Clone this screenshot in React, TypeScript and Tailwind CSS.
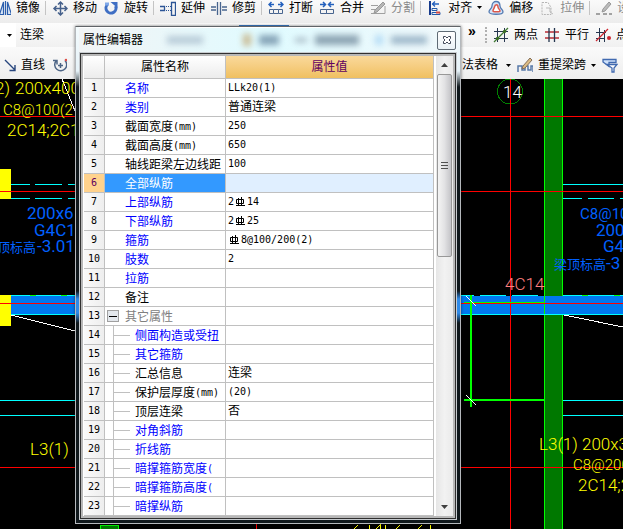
import type { ReactNode } from "react";

type Row = {
	name: string;
	unit?: string;
	value?: ReactNode;
	tone?: "blue" | "black" | "gray";
	child?: boolean;
	group?: boolean;
	active?: boolean;
};

const tones = {
	blue: "text-[#0000ff]",
	black: "text-black",
	gray: "text-[#808080]",
};

const mono = "font-['DejaVu_Sans_Mono',monospace] text-[10px]";

function Rebar() {
	return (
		<svg width="11" height="10" viewBox="0 0 11 10" className="mx-px shrink-0" fill="none" stroke="#000">
			<path d="M1.500 2.500h7v4h-7zM3.500 1v8M6.500 0v9M1 8.500h9" />
		</svg>
	);
}

const rows: Row[] = [
	{ name: "名称", tone: "blue", value: <span className={mono}>LLk20(1)</span> },
	{ name: "类别", tone: "blue", value: "普通连梁" },
	{ name: "截面宽度", unit: "(mm)", value: <span className={mono}>250</span> },
	{ name: "截面高度", unit: "(mm)", value: <span className={mono}>650</span> },
	{ name: "轴线距梁左边线距", value: <span className={mono}>100</span> },
	{ name: "全部纵筋", active: true },
	{ name: "上部纵筋", tone: "blue", value: <><span className={mono}>2</span><Rebar /><span className={mono}>14</span></> },
	{ name: "下部纵筋", tone: "blue", value: <><span className={mono}>2</span><Rebar /><span className={mono}>25</span></> },
	{ name: "箍筋", tone: "blue", value: <><Rebar /><span className={mono}>8@100/200(2)</span></> },
	{ name: "肢数", tone: "blue", value: <span className={mono}>2</span> },
	{ name: "拉筋", tone: "blue" },
	{ name: "备注" },
	{ name: "其它属性", tone: "gray", group: true },
	{ name: "侧面构造或受扭", tone: "blue", child: true },
	{ name: "其它箍筋", tone: "blue", child: true },
	{ name: "汇总信息", child: true, value: "连梁" },
	{ name: "保护层厚度", unit: "(mm)", child: true, value: <span className={mono}>(20)</span> },
	{ name: "顶层连梁", child: true, value: "否" },
	{ name: "对角斜筋", tone: "blue", child: true },
	{ name: "折线筋", tone: "blue", child: true },
	{ name: "暗撑箍筋宽度", unit: "(", tone: "blue", child: true },
	{ name: "暗撑箍筋高度", unit: "(", tone: "blue", child: true },
	{ name: "暗撑纵筋", tone: "blue", child: true },
];

function Icon({ children }: { children: ReactNode }) {
	return (
		<svg width="16" height="16" viewBox="0 0 16 16" fill="none" className="shrink-0">
			{children}
		</svg>
	);
}

function Caret() {
	return (
		<svg width="5" height="3" viewBox="0 0 5 3" className="shrink-0">
			<path d="M0 0h5L2.500 3z" fill="#000" />
		</svg>
	);
}

function Tool({ icon, label, muted, menu }: { icon: ReactNode; label?: string; muted?: boolean; menu?: boolean }) {
	return (
		<button className={`flex shrink-0 items-center gap-[5px] whitespace-nowrap ${muted ? "text-[#8a8a8a]" : "text-black"}`}>
			<Icon>{icon}</Icon>
			{label}
			{menu && <Caret />}
		</button>
	);
}

function Sep() {
	return <span className="-ml-px h-[14px] w-px shrink-0 bg-[#c4c4c4]" />;
}

const icons = {
	mirror: <><path d="M8.500 2v12.500H4.500z" fill="#dce8f8" stroke="#2b5fae" strokeWidth="1.200" /><path d="M10.500 1v14" stroke="#2b5fae" strokeWidth="1.200" /><path d="M12.500 2v12.500h4z" fill="#dce8f8" stroke="#2b5fae" strokeWidth="1.200" /></>,
	move: <path d="M8.500 3v11M3 8.500h11M6 4.500l2.500-2.500 2.500 2.500M6 12.500l2.500 2.500 2.500-2.500M4.500 6L2 8.500 4.500 11M12.500 6L15 8.500 12.500 11" stroke="#46618c" strokeWidth="1.500" />,
	rotate: <><path d="M4.500 4.500a5 5 0 1 0 8 1.500" stroke="#3f6fc4" strokeWidth="3" /><path d="M7.500 2h7v6z" fill="#3f6fc4" /><path d="M2 2.500h4v3H2z" fill="#7fa8e8" /></>,
	extend: <><path d="M0 6.500h4.500v4H0M11.500 2.500h4v13h-4z" stroke="#2c5596" strokeWidth="1.300" /><path d="M6 6.500h5M6 10.500h5" stroke="#2c5596" strokeDasharray="1 1" /></>,
	trim: <path d="M0 7h5M0 10h5M11 7h5M11 10h5M6.500 2v13M9.500 2v13" stroke="#48658f" strokeWidth="1.300" />,
	breakIt: <><path d="M1 4.500h5M10 4.500h5M3.500 2L1 4.500 3.500 7M12.500 2L15 4.500 12.500 7" stroke="#2360bd" strokeWidth="1.500" /><path d="M1.500 9.500h4v4h-4zM10.500 9.500h4v4h-4zM5.500 9.500h5M5.500 13.500h5" stroke="#48658f" /></>,
	merge: <><path d="M1 4.500h5M10 4.500h5M4 2l2.500 2.500L4 7M12 2L9.500 4.500 12 7" stroke="#2360bd" strokeWidth="1.500" /><path d="M1.500 9.500h6v4h-6zM7.500 9.500h7v4h-7z" stroke="#48658f" /></>,
	split: <><path d="M1 5.500h7M1 13.500h14V6M1 9.500h4" stroke="#a0a0a0" /><path d="M13 2l2 2-8 8-3 1 1-3z" fill="#b5b5b5" stroke="#999" /></>,
	align: <><path d="M3 1v14" stroke="#173b8c" strokeWidth="2" /><path d="M5 4h7M8 1.500L5.500 4 8 6.500" stroke="#2360bd" strokeWidth="1.300" /><path d="M5 8.500h5v2H5zM5 12.500h8v2H5z" stroke="#245aa9" /><path d="M9 11.500h4v2H9z" fill="#d64b42" /></>,
	offset: <><path d="M1 12c0-3 3-3 3-6 0-6 8-6 8 0 0 3 3 3 3 6 0 3-14 3-14 0z" fill="#d3e3f8" stroke="#547bb2" strokeWidth="1.300" /><path d="M5 11c0-2 1-2 1.500-4C7 4 10 4 10 7c0 2 2 2 2 4 0 1-7 1-7 0z" fill="#fff" stroke="#db584b" strokeWidth="1.500" /></>,
	stretch: <><path d="M3 2.500h6l3 5v7H3z" stroke="#b5b5b5" strokeDasharray="2 1" /><path d="M7 8h4v4M11 12l3 2" stroke="#bbb" /></>,
	set: <><path d="M0 14h4M7 14h4M13 14h3" stroke="#888" strokeWidth="1.300" /><path d="M13 2l2 2-6 7-3 1 1-3z" fill="#bbb" stroke="#999" /></>,
	twoPoint: <><path d="M1 4.500h14M1 11.500h14M4.500 1v14M11.500 1v14" stroke="#26364f" /><path d="M1 15L15 1" stroke="#3f7932" strokeWidth="1.300" /><circle cx="4.500" cy="11.500" r="1.700" fill="#3b6e24" /><circle cx="11.500" cy="4.500" r="1.700" fill="#3b6e24" /></>,
	parallel: <><path d="M1 5h14M1 11h14" stroke="#b92d35" strokeWidth="1.300" /><path d="M5 1v14M10.500 1v14" stroke="#26364f" strokeWidth="1.300" /></>,
	pointAngle: <><path d="M1 5.500h10M1 11.500h8M4.500 1v14M9.500 3v12" stroke="#26364f" /><path d="M1 14L13 2" stroke="#cd2630" strokeWidth="1.300" /><circle cx="14" cy="11" r="2" fill="#cd2630" /></>,
	line: <path d="M5 3l10 10M15 8v5.500h-5.500" stroke="#27457d" strokeWidth="1.400" />,
	arc: <><path d="M5 4a6 6 0 1 0 9-.500M2 3.500h4v4M9.500 6v5M7 8.500h5" stroke="#4c6485" strokeWidth="1.500" /><circle cx="15" cy="3" r="1.300" fill="#dc4f49" /></>,
	span: <><path d="M1 15V9h4v4h3V9h3v4h3V9h2v6" stroke="#587aa9" strokeWidth="1.500" /><path d="M13 1l2 2-7 8-3 1 1-3z" fill="#ddbc84" stroke="#846f59" /></>,
	filter: <><path d="M1 2.500h13v3H7v4L1 5z" fill="#cfe2fb" stroke="#416ab0" strokeWidth="1.300" /><path d="M5 7.500h10l-3 3.500v4h-2v-4z" fill="#fff" stroke="#416ab0" strokeWidth="1.300" /></>,
};

function Toolbars() {
	return (
		<header className="bg-[#f3f3f3] text-xs leading-4">
			<div className="-ml-[5px] flex h-[23px] items-center gap-1.5 overflow-hidden bg-linear-to-b from-[#fafafa] to-[#ececec] pb-2">
				<Tool icon={icons.mirror} label="镜像" />
				<Sep />
				<Tool icon={icons.move} label="移动" />
				<Tool icon={icons.rotate} label="旋转" />
				<Sep />
				<Tool icon={icons.extend} label="延伸" />
				<Tool icon={icons.trim} label="修剪" />
				<Sep />
				<Tool icon={icons.breakIt} label="打断" />
				<Tool icon={icons.merge} label="合并" />
				<Tool icon={icons.split} label="分割" muted />
				<Sep />
				<Tool icon={icons.align} label="对齐" menu />
				<Tool icon={icons.offset} label="偏移" />
				<Tool icon={icons.stretch} label="拉伸" muted />
				<Sep />
				<Tool icon={icons.set} label="设" muted />
			</div>
			<div className="flex h-6 items-center gap-1.5 overflow-hidden bg-linear-to-b from-[#fcfcfc] to-[#f0f0f0]">
				<div className="flex w-[462px] shrink-0 items-center self-stretch">
					<button className="flex h-6 w-4 items-center justify-end bg-white pr-1" aria-label="构件类型">
						<Caret />
					</button>
					<span className="ml-1">连梁</span>
					<span className="ml-[195px] h-[22px] w-[50px] self-end border border-[#3c7fd0] bg-[#d9f6fc]" />
				</div>
				<button className="-mt-2 w-2 shrink-0 text-sm font-bold leading-4" aria-label="更多">»</button>
				<span className="ml-[3px] h-4 w-0 shrink-0 border-l-2 border-dotted border-[#b0b0b0]" />
				<Tool icon={icons.twoPoint} label="两点" />
				<Tool icon={icons.parallel} label="平行" />
				<Tool icon={icons.pointAngle} label="点" />
			</div>
			<div className="flex h-8 items-center gap-1.5 overflow-hidden bg-linear-to-b from-[#fafafa] to-[#eeeeee] pt-1">
				<div className="flex w-[456px] shrink-0 gap-1.5">
					<Tool icon={icons.line} label="直线" />
					<Tool icon={icons.arc} />
				</div>
				<button className="flex shrink-0 items-center gap-2 whitespace-nowrap">
					法表格 <Caret />
				</button>
				<Tool icon={icons.span} label="重提梁跨" menu />
				<Tool icon={icons.filter} />
			</div>
		</header>
	);
}

function Drawing() {
	return (
		<svg
			className="block min-h-[450px] w-full flex-1 bg-black font-['Roboto','Noto_Sans_CJK_SC',sans-serif] text-[17px] font-light"
			shapeRendering="crispEdges"
		>
			{/* column and beam */}
			<rect x="544" width="19" height="100%" fill="#007800" />
			<path d="M544.500 0v900M562.500 0v900" stroke="#00ff00" />
			<rect x="11" y="217" width="100%" height="18" fill="#0078f0" />
			<path d="M544.500 217v18M582 216.500h6M614 216.500h6M30 216.500h6M61 216.500h6" stroke="#00ff00" />
			<path
				d="M11 216.500h19M36 216.500h25M67 216.500h20M461 216.500h13M480 216.500h26M512 216.500h26M563 216.500h19M588 216.500h26M620 216.500h900M11 235.500h1500M11 105.500h19M35 105.500h27M68 105.500h19M11 119.500h19M35 119.500h27M68 119.500h19M563 105.500h900M563 119.500h19M588 119.500h26M620 119.500h20M0 321.500h80M0 336.500h80M563 321.500h900M563 336.500h900"
				stroke="#00ffff"
			/>
			<path d="M0 90h11v30H0zM0 216h11v31H0z" fill="#ffff00" />
			<path d="M11 236l64 16M564 236l64 13M62 0l13 32" stroke="#fff" />

			{/* axis grid */}
			<circle cx="510" cy="12.500" r="12.500" fill="none" stroke="#008000" />
			<path d="M0 37.500h2000M0 112.500h2000M0 224.500h2000M0 388.500h2000M510.500 0v900M256.500 0v900" stroke="#ff0000" />
			<text x="503" y="19" fill="#fff">14</text>

			{/* dimension marks */}
			<path d="M464 223.500h80" stroke="#00ff00" />
			<path d="M471 216v112M464 321h80" stroke="#00ff00" strokeWidth="2" />
			<path d="M466 217l10 10M466 316l10 10" stroke="#fff" />

			{/* beam labels */}
			<text x="505" y="211" fill="#ff8080">4C14</text>
			<g fill="#ffff00">
				<text x="-5" y="15">2)</text>
				<text x="15" y="15">200x400</text>
				<text x="3" y="36" className="text-[15px]">C8@100(2</text>
				<text x="7" y="57">2C14;2C1</text>
				<text x="30" y="376">L3(1)</text>
				<text x="539" y="371">L3(1)</text>
				<text x="582" y="371">200x3</text>
				<text x="573" y="391" className="text-[15px]">C8@200</text>
				<text x="578" y="412">2C14;2</text>
			</g>
			<g fill="#0060ff" className="font-normal">
				<text x="27" y="140">200x6</text>
				<text x="34" y="157">G4C14</text>
				<text x="-3" y="173" className="text-[13px]">顶标高</text>
				<text x="37" y="173">-3.010</text>
				<text x="580" y="140" className="text-[15px]">C8@100</text>
				<text x="596" y="157">200x6</text>
				<text x="603" y="173">G4</text>
				<text x="554" y="190" className="text-[13px]">梁顶标高</text>
				<text x="606" y="190">-3</text>
			</g>
			<path d="M100 446h18v8h-18z" fill="#007800" stroke="#00ff00" />
			<path d="M354 450l4-4M369 446v4M376 450l4-4v4M385 446v4M396 450l4-4M418 450l4-4M430 446v4" stroke="#ffff00" />
		</svg>
	);
}

function NameCell({ row }: { row: Row }) {
	return (
		<div className={`flex h-[18px] items-center overflow-hidden whitespace-nowrap ${row.active ? "text-white" : tones[row.tone ?? "black"]}`}>
			{row.child && (
				<span className="mr-[5px] ml-2 flex h-[19px] w-[17px] shrink-0 items-center border-l border-[#c0c0c0]">
					<span className="h-px w-full bg-[#c0c0c0]" />
				</span>
			)}
			{row.group && (
				<button className="mr-1.5 ml-0.5 flex h-3 w-3 shrink-0 items-center justify-center border border-[#a0a0a0] bg-[#e3e7ec]" aria-label="折叠">
					<span className="h-px w-2 bg-black" />
				</button>
			)}
			{!row.child && !row.group && <span className="w-5 shrink-0" />}
			<span className="pt-0.5">{row.name}</span>
			{row.unit && <span className={`${mono} pt-0.5`}>{row.unit}</span>}
		</div>
	);
}

function PropertyTable() {
	return (
		<table className="w-[350px] shrink-0 table-fixed border-separate border-spacing-0 bg-white text-xs leading-4">
			<colgroup>
				<col className="w-[21px]" />
				<col className="w-[121px]" />
				<col />
			</colgroup>
			<thead>
				<tr className="h-[23px]">
					<th className="border-r border-b border-[#c0c0c0] bg-linear-to-b from-white to-[#ececec] p-0" />
					<th className="border-r border-b border-[#c0c0c0] bg-linear-to-b from-white to-[#ececec] p-0 font-normal">属性名称</th>
					<th className="border-r border-b border-[#c0c0c0] bg-linear-to-b from-[#fad99b] to-[#f0c060] p-0 font-normal text-[#600060]">属性值</th>
				</tr>
			</thead>
			<tbody>
				{rows.map((row, i) => (
					<tr key={row.name} className="h-[19px]">
						<th className={`border-r border-b border-[#c0c0c0] p-0 font-normal ${mono} ${row.active ? "bg-[#ffd28c] text-[#600060]" : "bg-linear-to-r from-[#fafafa] to-[#eeeeee]"}`}>
							{i + 1}
						</th>
						<td className={`border-r border-b border-[#c0c0c0] p-0 ${row.active ? "bg-[#3399ff]" : ""}`}>
							<NameCell row={row} />
						</td>
						<td className={`border-r border-b border-[#c0c0c0] p-0 ${row.active ? "bg-[#e0efff]" : ""}`}>
							<div className="flex h-[18px] items-center pl-0.5">{row.value}</div>
						</td>
					</tr>
				))}
			</tbody>
		</table>
	);
}

function ScrollBar() {
	return (
		<div className="ml-0.5 flex flex-1 flex-col items-center bg-linear-to-r from-[#e6e6e6] via-[#f2f2f2] to-[#eaeaea]">
			<button className="flex h-[18px] w-full items-center justify-center" aria-label="向上滚动">
				<svg width="7" height="4"><path d="M0 4h7L3.500 0z" fill="#404040" /></svg>
			</button>
			<div className="flex h-[183px] w-[15px] flex-col items-center justify-center gap-0.5 rounded-xs border border-[#989898] bg-linear-to-r from-[#f4f4f4] via-[#e2e2e4] to-[#c4c4c8]">
				<span className="h-px w-[7px] bg-[#505050]" />
				<span className="h-px w-[7px] bg-[#505050]" />
				<span className="h-px w-[7px] bg-[#505050]" />
			</div>
			<button className="mt-auto flex h-[18px] w-full items-center justify-center" aria-label="向下滚动">
				<svg width="7" height="4"><path d="M0 0h7L3.500 4z" fill="#404040" /></svg>
			</button>
		</div>
	);
}

function PropertyEditor() {
	return (
		<section
			role="dialog"
			aria-labelledby="editor-title"
			className="absolute top-[26px] left-[75px] w-[386px] border border-[#b4b8bc] border-t-[#606468] bg-[linear-gradient(to_bottom,#f4fbfd_0,#e6f2f8_44px,#10181c_60px,#10181c_264px,#2f8ae8_272px,#2f8ae8_286px,#10181c_296px)] px-[3px] pb-[3px] shadow-[0_0_3px_#0008]"
		>
			<div className="flex h-[25px] items-center justify-between overflow-hidden border-t border-white bg-linear-to-r from-[#f2f4f5] via-[#e0fbff] to-[#f0f8fb] pr-px pl-1">
				<h2 id="editor-title" className="text-xs leading-4">属性编辑器</h2>
				{/* toolbar showing through the glass */}
				<div className="ml-6 flex flex-1 items-center gap-2 blur-[3px]">
					<span className="h-2 w-9 bg-[#b8cbd8]" />
					<span className="ml-8 h-3 w-2 bg-[#c9bb94]" />
					<span className="h-2.5 w-5 bg-[#86a4b8]" />
					<span className="ml-2 h-1 w-3 bg-[#9eb0bd]" />
					<span className="h-2.5 w-11 bg-[#8da4b3]" />
					<span className="ml-2 h-2.5 w-2 bg-[#b5dcf5]" />
					<span className="h-2 w-9 bg-[#9cb6c9]" />
				</div>
				<button className="flex h-[19px] w-[19px] items-center justify-center rounded-xs border border-[#5f6b75] bg-linear-to-b from-white to-[#eaf2f6]" aria-label="关闭">
					<svg width="8" height="8" viewBox="0 0 8 8" fill="#fff" stroke="#404858">
						<path d="M.5.5h2L4 2 5.500.5h2v2L6 4l1.500 1.500v2h-2L4 6 2.500 7.500h-2v-2L2 4 .5 2.500z" />
					</svg>
				</button>
			</div>
			<div className="border border-[#c8ccd0]">
				<div className="border border-[#303030]">
					<div className="flex border-2 border-[#b8b8b8] bg-white pl-px">
						<PropertyTable />
						<ScrollBar />
					</div>
				</div>
			</div>
		</section>
	);
}

export default function App() {
	return (
		<main className="relative flex min-h-screen w-full flex-col overflow-hidden bg-black font-['Liberation_Sans','Noto_Sans_CJK_SC',sans-serif] text-black">
			<Toolbars />
			<Drawing />
			<PropertyEditor />
		</main>
	);
}
